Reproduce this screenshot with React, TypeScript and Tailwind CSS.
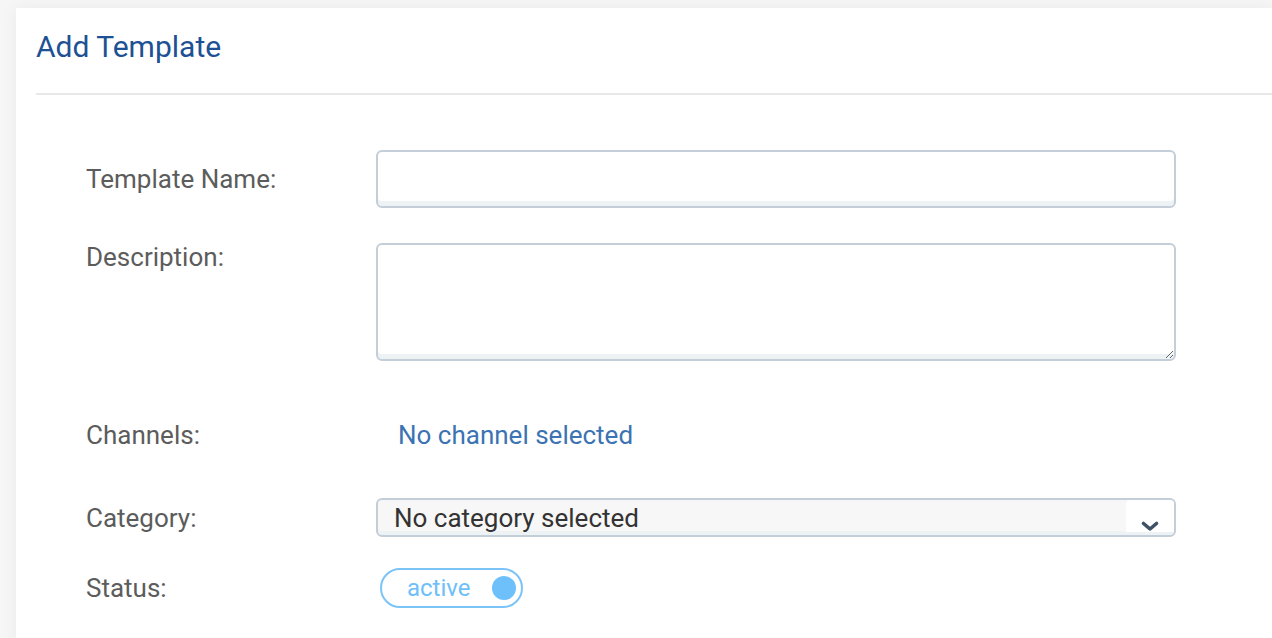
import React from "react";

export default function App() {
  const font = { fontFamily: "Roboto, 'Noto Sans', sans-serif" };
  return (
    <div className="min-h-screen w-full overflow-hidden bg-[#f6f6f6] pl-[16px] pt-[8px]" style={font}>
      <div className="min-h-[640px] bg-white pl-[20px] pt-[21px] shadow-[0_0_16px_rgba(0,0,0,0.05)]">
        <h1 className="text-[30px] leading-[36px] text-[#1d5193] font-normal">Add Template</h1>
        <div className="mt-[28px] border-t-2 border-[#e8e8e8]" />

        <div className="pl-[50px]">
          {/* Template name */}
          <div className="mt-[55px] grid grid-cols-[290px_800px] items-center">
            <label className="text-[26px] leading-[30px] text-[#5c5c5c]">Template Name:</label>
            <input
              type="text"
              className="h-[58px] w-[800px] rounded-[6px] border-2 border-[#c4ced8] bg-white shadow-[inset_0_-5px_0_#edf2f5] outline-none"
            />
          </div>

          {/* Description */}
          <div className="mt-[35px] grid grid-cols-[290px_800px] items-start">
            <label className="-mt-[1px] text-[26px] leading-[30px] text-[#5c5c5c]">Description:</label>
            <textarea className="block h-[118px] w-[800px] rounded-[6px] border-2 border-[#c4ced8] bg-white shadow-[inset_0_-5px_0_#edf2f5] outline-none" />
          </div>

          {/* Channels */}
          <div className="mt-[59px] grid grid-cols-[290px_800px] items-center">
            <label className="text-[26px] leading-[30px] text-[#5c5c5c]">Channels:</label>
            <span className="pl-[22px] text-[26px] leading-[30px] text-[#3b73b3]">No channel selected</span>
          </div>

          {/* Category */}
          <div className="mt-[48px] grid grid-cols-[290px_800px] items-center">
            <label className="text-[26px] leading-[30px] text-[#5c5c5c]">Category:</label>
            <div className="flex h-[39px] w-[800px] items-stretch overflow-hidden rounded-[6px] border-2 border-[#c4ced8] bg-[#f7f7f7] shadow-[inset_0_-4px_0_#edf2f5]">
              <span className="flex flex-1 items-center pl-[16px] text-[26px] leading-[30px] text-[#333333]">
                No category selected
              </span>
              <span className="mb-[3px] flex w-[48px] items-end justify-center rounded-tl-[4px] bg-white pb-[0px]">
                <svg width="20" height="12" viewBox="0 0 20 12">
                  <polyline points="3.5,3.5 10,9 16.5,3.5" fill="none" stroke="#3e5166" strokeWidth="3.6" strokeLinecap="round" strokeLinejoin="round" />
                </svg>
              </span>
            </div>
          </div>

          {/* Status */}
          <div className="mt-[31px] grid grid-cols-[290px_800px] items-center">
            <label className="text-[26px] leading-[30px] text-[#5c5c5c]">Status:</label>
            <div className="ml-[4px] flex h-[40px] w-[143px] items-center justify-between rounded-full border-2 border-[#7cc4f8] pl-[25px] pr-[5px]">
              <span className="text-[24px] leading-[28px] text-[#6ec0fa]">active</span>
              <span className="h-[24px] w-[24px] rounded-full bg-[#6ec0fa]" />
            </div>
          </div>
        </div>
      </div>
    </div>
  );
}
